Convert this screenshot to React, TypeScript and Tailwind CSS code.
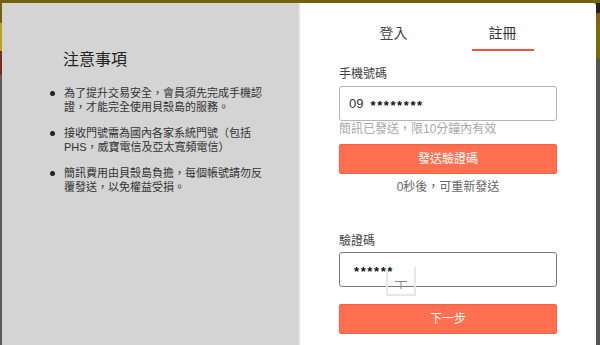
import React from "react";

const font = { fontFamily: '"Liberation Sans","Noto Sans CJK TC",sans-serif' };

function Bullet({ children }: { children: React.ReactNode }) {
  return (
    <div className="flex items-start">
      <div className="mt-[5px] h-[5px] w-[5px] shrink-0 rounded-full bg-[#222]" />
      <div className="ml-[9px] w-[200px] text-[11px] leading-[14px] text-[#333]">{children}</div>
    </div>
  );
}

export default function App() {
  return (
    <div className="flex h-[345px] w-[600px] flex-col overflow-hidden bg-[#6a6a6a]" style={font}>
      <div className="h-[3px] w-full shrink-0 bg-[#75620a]" />
      <div className="flex flex-1">
        <div className="flex w-[2px] shrink-0 flex-col">
          <div className="h-[20px] bg-[#75620a]" />
          <div className="h-[28px] bg-[#b8a21a]" />
          <div className="h-[24px] bg-[#7a2b1e]" />
          <div className="flex-1 bg-[#5a5a5a]" />
        </div>
        <div className="flex flex-1">
          <div className="w-[298px] shrink-0 border-r-2 border-[#dfdfdf] bg-[#d4d4d4] pl-[48px] pt-[45px]">
            <div className="ml-[13px] text-[16px] leading-[24px] text-[#222]">注意事項</div>
            <div className="mt-[14px] flex flex-col gap-[12px]">
              <Bullet>為了提升交易安全，會員須先完成手機認證，才能完全使用貝殼島的服務。</Bullet>
              <Bullet>接收門號需為國內各家系統門號（包括PHS，威寶電信及亞太寬頻電信）</Bullet>
              <Bullet>簡訊費用由貝殼島負擔，每個帳號請勿反覆發送，以免權益受損。</Bullet>
            </div>
          </div>
          <div className="flex flex-1 flex-col rounded-tr-[3px] bg-white px-[39px]">
            <div className="flex pt-[20px]">
              <div className="flex flex-1 flex-col items-center">
                <div className="text-[14px] leading-[20px] text-[#444]">登入</div>
              </div>
              <div className="flex flex-1 flex-col items-center">
                <div className="text-[14px] leading-[20px] text-[#333]">註冊</div>
                <div className="mt-[6px] h-[2px] w-[62px] bg-[#f4553a]" />
              </div>
            </div>
            <div className="mt-[15px] text-[12px] leading-[16px] text-[#444]">手機號碼</div>
            <div className="mt-[4px] flex h-[35px] items-center rounded-[3px] border border-[#b5b5b5] pl-[9px] text-[13px] text-[#333]">
              <span>09</span>
              <span className="relative top-[2px] ml-[7px] font-bold tracking-[1.6px] text-[#111]">********</span>
            </div>
            <div className="text-[12px] leading-[16px] text-[#a8a8a8]">簡訊已發送，限10分鐘內有效</div>
            <div className="mt-[7px] flex h-[30px] items-center justify-center rounded-[2px] border border-[#f5603e] bg-[#ff6f50] text-[12px] text-white">
              發送驗證碼
            </div>
            <div className="mt-[5px] text-center text-[12px] leading-[16px] text-[#666]">0秒後，可重新發送</div>
            <div className="mt-[38px] text-[12px] leading-[16px] text-[#444]">驗證碼</div>
            <div className="relative mt-[3px] flex h-[35px] items-center rounded-[3px] border border-[#7a7a7a] pl-[14px] text-[13px] text-[#111]">
              <span className="relative top-[2px] font-bold tracking-[1.6px]">******</span>
              <div className="absolute left-[46px] top-[13px] h-[30px] w-[30px] border-2 border-[#e6e6e6] border-t-transparent">
                <svg className="absolute left-[7px] top-[13px]" width="12" height="8" viewBox="0 0 12 8">
                  <path d="M0 0.5H12M6 0.5V8" stroke="#888" strokeWidth="1" fill="none" />
                </svg>
              </div>
            </div>
            <div className="mt-[17px] flex h-[30px] items-center justify-center rounded-[2px] border border-[#f5603e] bg-[#ff6f50] text-[12px] text-white">
              下一步
            </div>
          </div>
        </div>
        <div className="flex w-[4px] shrink-0 flex-col">
          <div className="h-[10px] bg-[#222]" />
          <div className="h-[10px] bg-[#8a5a10]" />
          <div className="h-[35px] bg-[#7a6a00]" />
          <div className="flex-1 bg-[#555]" />
        </div>
      </div>
    </div>
  );
}
